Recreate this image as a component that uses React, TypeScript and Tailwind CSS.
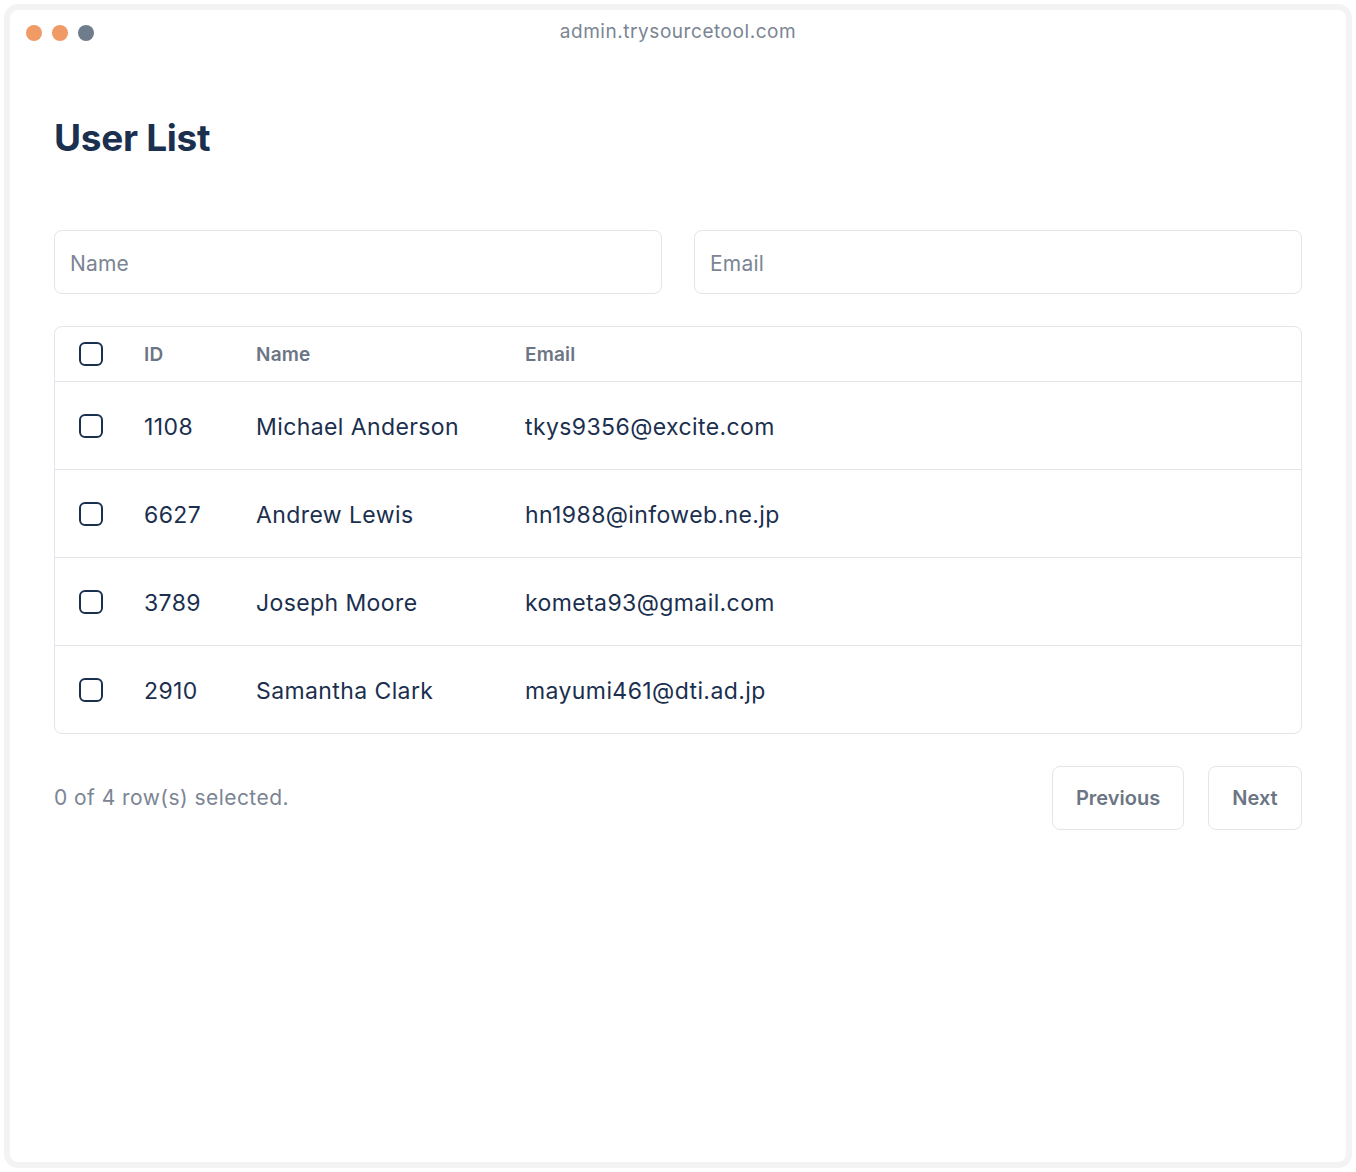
import React from "react";

const users = [
  { id: "1108", name: "Michael Anderson", email: "tkys9356@excite.com" },
  { id: "6627", name: "Andrew Lewis", email: "hn1988@infoweb.ne.jp" },
  { id: "3789", name: "Joseph Moore", email: "kometa93@gmail.com" },
  { id: "2910", name: "Samantha Clark", email: "mayumi461@dti.ad.jp" },
];

function Box() {
  return <div className="w-6 h-6 rounded-[6px] border-2 border-[#1b2f4e]" />;
}

export default function App() {
  return (
    <div
      className="w-[1356px] h-[1172px] bg-white p-1"
      style={{ fontFamily: "Inter, 'Noto Sans', sans-serif" }}
    >
      <div className="w-full h-full rounded-[14px] border-[6px] border-[#f3f3f4] bg-white flex flex-col">
        <div className="relative h-[42px] flex items-center px-4">
          <div className="flex gap-[10px] mt-[3px]">
            <div className="w-4 h-4 rounded-full bg-[#f09a66]" />
            <div className="w-4 h-4 rounded-full bg-[#f09a66]" />
            <div className="w-4 h-4 rounded-full bg-[#6f7c8c]" />
          </div>
          <div className="absolute inset-0 flex items-center justify-center pt-[2px] text-[19px] text-[#7b8594] tracking-[0.55px]">
            admin.trysourcetool.com
          </div>
        </div>
        <div className="px-[44px] pt-[64px]">
          <h1 className="text-[37px] leading-[44px] font-bold text-[#1b2f4e] tracking-[-0.3px]">User List</h1>
          <div className="mt-[70px] grid grid-cols-2 gap-8">
            <div className="h-16 rounded-[8px] border border-[#e2e5e9] flex items-center px-[15px] pt-1 text-[21px] text-[#7b8594] tracking-[0.2px]">
              Name
            </div>
            <div className="h-16 rounded-[8px] border border-[#e2e5e9] flex items-center px-[15px] pt-1 text-[21px] text-[#7b8594] tracking-[0.2px]">
              Email
            </div>
          </div>
          <div className="mt-8 rounded-[8px] border border-[#e2e5e9]">
            <div className="h-[55px] flex items-center pt-[3px] border-b border-[#e2e5e9] text-[19px] font-semibold text-[#6b7583] tracking-[0.2px]">
              <div className="w-[89px] pl-6 -mt-[3px]"><Box /></div>
              <div className="w-[112px]">ID</div>
              <div className="w-[269px]">Name</div>
              <div>Email</div>
            </div>
            {users.map((u, i) => (
              <div
                key={u.id}
                className={`flex items-center text-[23px] text-[#1b2f4e] tracking-[0.4px] ${i < users.length - 1 ? "h-[88px] border-b border-[#e2e5e9]" : "h-[87px]"}`}
              >
                <div className="w-[89px] pl-6"><Box /></div>
                <div className="w-[112px] pt-1">{u.id}</div>
                <div className="w-[269px] pt-1">{u.name}</div>
                <div className="pt-1">{u.email}</div>
              </div>
            ))}
          </div>
          <div className="mt-8 flex items-center justify-between">
            <div className="text-[21px] text-[#7b8594] tracking-[0.45px]">0 of 4 row(s) selected.</div>
            <div className="flex gap-6">
              <div className="h-16 w-[132px] rounded-[8px] border border-[#e2e5e9] flex items-center justify-center text-[20px] font-semibold text-[#6b7583]">
                Previous
              </div>
              <div className="h-16 w-[94px] rounded-[8px] border border-[#e2e5e9] flex items-center justify-center text-[20px] font-semibold text-[#6b7583]">
                Next
              </div>
            </div>
          </div>
        </div>
      </div>
    </div>
  );
}
